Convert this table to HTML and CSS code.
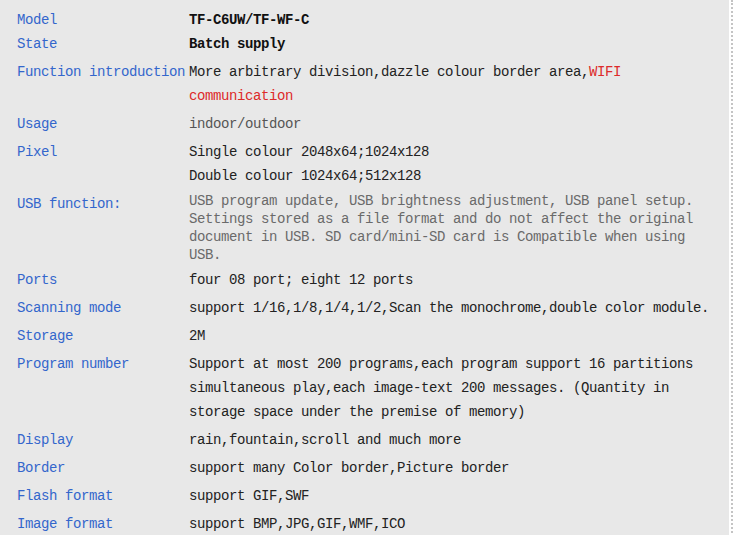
FILE: index.html
```html
<!DOCTYPE html>
<html lang="en">
<head>
    <meta charset="UTF-8">
    <meta name="viewport" content="width=device-width, initial-scale=1.0">
    <title>TF-C6UW Specification</title>
    <link rel="stylesheet" href="styles.css">
</head>
<body>
    <div class="frame">
        <div class="sheet">
            <div class="row tight">
                <div class="label">Model</div>
                <div class="value strong">TF-C6UW/TF-WF-C</div>
            </div>
            <div class="row">
                <div class="label">State</div>
                <div class="value strong">Batch supply</div>
            </div>
            <div class="row">
                <div class="label">Function introduction</div>
                <div class="value">More arbitrary division,dazzle colour border area,<span class="hot">WIFI</span> <span class="hot">communication</span></div>
            </div>
            <div class="row">
                <div class="label">Usage</div>
                <div class="value muted">indoor/outdoor</div>
            </div>
            <div class="row">
                <div class="label">Pixel</div>
                <div class="value">Single colour 2048x64;1024x128<br>Double colour 1024x64;512x128</div>
            </div>
            <div class="row">
                <div class="label">USB function:</div>
                <div class="value note">USB program update, USB brightness adjustment, USB panel setup. Settings stored as a file format and do not affect the original document in USB. SD card/mini-SD card is Compatible when using USB.</div>
            </div>
            <div class="row">
                <div class="label">Ports</div>
                <div class="value">four 08 port; eight 12 ports</div>
            </div>
            <div class="row">
                <div class="label">Scanning mode</div>
                <div class="value">support 1/16,1/8,1/4,1/2,Scan the monochrome,double color module.</div>
            </div>
            <div class="row">
                <div class="label">Storage</div>
                <div class="value">2M</div>
            </div>
            <div class="row">
                <div class="label">Program number</div>
                <div class="value">Support at most 200 programs,each program support 16 partitions simultaneous play,each image-text 200 messages. (Quantity in storage space under the premise of memory)</div>
            </div>
            <div class="row">
                <div class="label">Display</div>
                <div class="value">rain,fountain,scroll and much more</div>
            </div>
            <div class="row">
                <div class="label">Border</div>
                <div class="value">support many Color border,Picture border</div>
            </div>
            <div class="row">
                <div class="label">Flash format</div>
                <div class="value">support GIF,SWF</div>
            </div>
            <div class="row">
                <div class="label">Image format</div>
                <div class="value">support BMP,JPG,GIF,WMF,ICO</div>
            </div>
        </div>
    </div>
</body>
</html>
```

FILE: styles.css
```css
html, body {
    margin: 0;
    height: 100%;
    overflow: hidden;
}
body {
    font-family: "Liberation Mono", "DejaVu Sans Mono", monospace;
    font-size: 14px;
    letter-spacing: -0.4px;
    background-color: #ffffff;
}
.frame {
    width: 731px;
    min-height: 100%;
    border-right: 2px dotted #c4c4c4;
}
.sheet {
    width: 730px;
    min-height: 100vh;
    box-sizing: border-box;
    padding: 8px 0 0 17px;
    background-color: #e8e8e8;
    border-right: 1px solid #ffffff;
}
.row {
    display: flex;
    padding-bottom: 4px;
    line-height: 24px;
}
.row.tight {
    padding-bottom: 0;
}
.label {
    width: 172px;
    flex-shrink: 0;
    color: #3366cc;
    white-space: nowrap;
}
.value {
    width: 530px;
    color: #222222;
}
.value.strong {
    font-weight: bold;
    color: #111111;
}
.value.muted {
    color: #555555;
}
.value.note {
    color: #6a6a6a;
    line-height: 18px;
}
.hot {
    color: #dd2a2a;
}
```
